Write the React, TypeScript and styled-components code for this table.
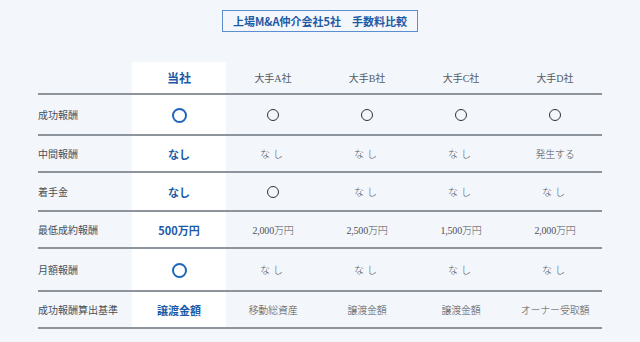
import React from "react";
import styled, { createGlobalStyle } from "styled-components";

const GlobalStyle = createGlobalStyle`
    html, body {
        margin: 0;
        padding: 0;
        background: #f3f6fb;
    }
    body {
        font-family: "Noto Sans CJK JP", "Noto Sans", sans-serif;
    }
`;

type Mark = "ours" | "theirs";

interface Row
{
    label: string;
    height: number;
    ours: React.ReactNode;
    others: React.ReactNode[];
}

const StyledPage = styled.div`
    width: 640px;
    height: 342px;
    overflow: hidden;
    display: flex;
    flex-direction: column;
    align-items: center;
    padding-top: 10px;
    box-sizing: border-box;
`;

const StyledTitle = styled.h2`
    margin: 0;
    height: 22px;
    box-sizing: border-box;
    padding: 0 10px;
    display: flex;
    align-items: center;
    border: 1px solid #5b8fd0;
    color: #1d5aa6;
    font-size: 11px;
    font-weight: 700;
    letter-spacing: 0;
    white-space: pre;
`;

const StyledTable = styled.table`
    margin-top: 30px;
    width: 564px;
    border-collapse: collapse;
    table-layout: fixed;
`;

const StyledHeadCell = styled.th<{ $ours?: boolean }>`
    height: 31px;
    padding: 0;
    border-bottom: 2px solid #8d949c;
    background: ${(p) => (p.$ours ? "#ffffff" : "transparent")};
    color: ${(p) => (p.$ours ? "#1d5aa6" : "#555a60")};
    font-family: ${(p) =>
        p.$ours
            ? `"Noto Sans CJK JP", sans-serif`
            : `"Liberation Serif", "Noto Sans CJK JP", serif`};
    font-size: ${(p) => (p.$ours ? "12px" : "10px")};
    font-weight: ${(p) => (p.$ours ? 700 : 400)};
    text-align: center;
    vertical-align: middle;
`;

const StyledRow = styled.tr<{ $h: number }>`
    height: ${(p) => p.$h}px;
`;

const StyledLabel = styled.td`
    padding: 0;
    border-bottom: 2px solid #8d949c;
    color: #4a4f55;
    font-size: 10px;
    text-align: left;
    vertical-align: middle;
    white-space: nowrap;
`;

const StyledOurs = styled.td`
    padding: 0;
    border-bottom: 2px solid #8d949c;
    background: #ffffff;
    color: #1d5aa6;
    font-size: 11px;
    font-weight: 700;
    text-align: center;
    vertical-align: middle;
`;

const StyledOther = styled.td`
    padding: 0;
    border-bottom: 2px solid #8d949c;
    color: #4f5358;
    font-family: "Liberation Serif", "Noto Sans CJK JP", serif;
    font-size: 10px;
    font-weight: 300;
    text-align: center;
    vertical-align: middle;
    letter-spacing: -0.2px;
`;

const StyledSpaced = styled.span`
    letter-spacing: 3px;
`;

const StyledCircle = styled.span<{ $kind: Mark }>`
    display: inline-block;
    vertical-align: middle;
    box-sizing: border-box;
    border-radius: 50%;
    width: ${(p) => (p.$kind === "ours" ? 15 : 12)}px;
    height: ${(p) => (p.$kind === "ours" ? 15 : 12)}px;
    border: ${(p) => (p.$kind === "ours" ? "2px solid #1f66b8" : "1.7px solid #2f3338")};
`;

const nashi = <StyledSpaced>なし</StyledSpaced>;
const ring = <StyledCircle $kind="theirs" />;

const rows: Row[] = [
    { label: "成功報酬", height: 41, ours: <StyledCircle $kind="ours" />, others: [ring, ring, ring, ring] },
    { label: "中間報酬", height: 37, ours: "なし", others: [nashi, nashi, nashi, "発生する"] },
    { label: "着手金", height: 39, ours: "なし", others: [ring, nashi, nashi, nashi] },
    { label: "最低成約報酬", height: 37, ours: "500万円", others: ["2,000万円", "2,500万円", "1,500万円", "2,000万円"] },
    { label: "月額報酬", height: 43, ours: <StyledCircle $kind="ours" />, others: [nashi, nashi, nashi, nashi] },
    { label: "成功報酬算出基準", height: 37, ours: "譲渡金額", others: ["移動総資産", "譲渡金額", "譲渡金額", "オーナー受取額"] },
];

const companies = ["大手A社", "大手B社", "大手C社", "大手D社"];

const App = () =>
(
    <StyledPage>
        <GlobalStyle />
        <StyledTitle>{"上場M&A仲介会社5社　手数料比較"}</StyledTitle>
        <StyledTable>
            <thead>
                <tr>
                    <StyledHeadCell />
                    <StyledHeadCell $ours>当社</StyledHeadCell>
                    {companies.map((c) => (
                        <StyledHeadCell key={c}>{c}</StyledHeadCell>
                    ))}
                </tr>
            </thead>
            <tbody>
                {rows.map((r) => (
                    <StyledRow key={r.label} $h={r.height}>
                        <StyledLabel>{r.label}</StyledLabel>
                        <StyledOurs>{r.ours}</StyledOurs>
                        {r.others.map((o, i) => (
                            <StyledOther key={i}>{o}</StyledOther>
                        ))}
                    </StyledRow>
                ))}
            </tbody>
        </StyledTable>
    </StyledPage>
);

export default App;
